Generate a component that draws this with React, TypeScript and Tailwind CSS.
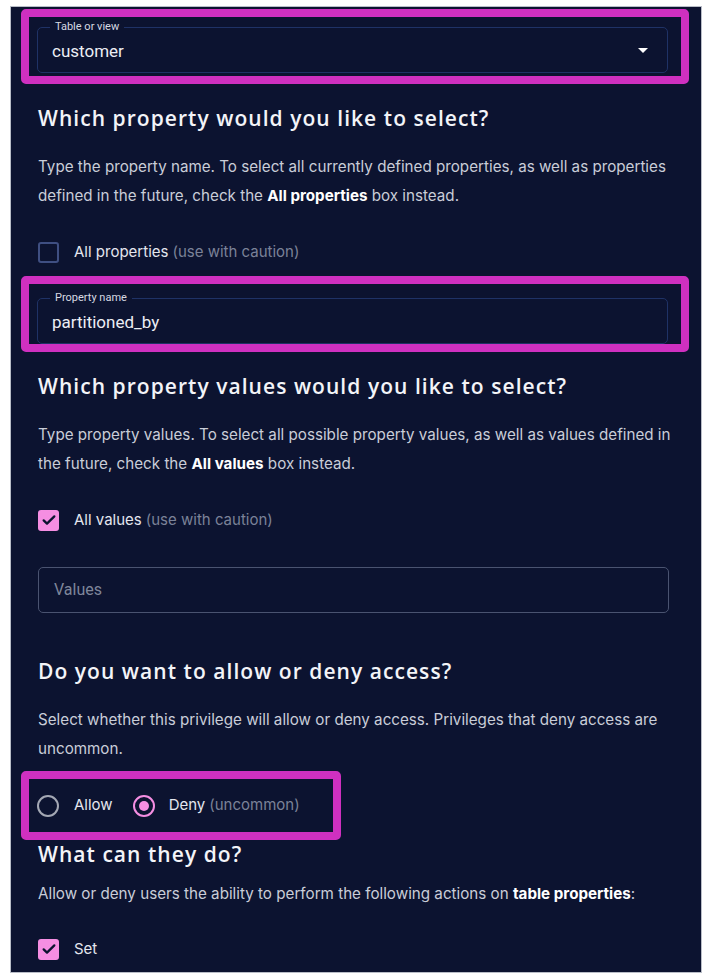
import { useState } from 'react';

const body = { fontFamily: 'Inter, "Noto Sans", sans-serif' };
const head = { fontFamily: '"Open Sans", Inter, sans-serif' };
const field = { fontFamily: 'Roboto, "Liberation Sans", sans-serif' };

function Heading({ children, className = '' }: { children: React.ReactNode; className?: string }) {
  return (
    <h2 style={head} className={`text-[21px] leading-[28px] font-semibold text-[#f3f4f8] tracking-[0.05em] ${className}`}>
      {children}
    </h2>
  );
}

function Para({ children, className = '' }: { children: React.ReactNode; className?: string }) {
  return (
    <p style={body} className={`text-[15.2px] leading-[29px] text-[#c9cdd8] ${className}`}>
      {children}
    </p>
  );
}

function Check({ checked, label, hint }: { checked: boolean; label: string; hint?: string }) {
  return (
    <div style={body} className="flex items-center h-6 text-[15px]">
      {checked ? (
        <span className="w-[21px] h-[21px] rounded-[3px] bg-[#f58ee2] flex items-center justify-center">
          <svg width="16" height="16" viewBox="0 0 24 24" fill="none" stroke="#0c1330" strokeWidth="3.4" strokeLinecap="round" strokeLinejoin="round">
            <path d="M4 12.5l5 5L20 6.5" />
          </svg>
        </span>
      ) : (
        <span className="w-[21px] h-[21px] rounded-[3px] border-2 border-[#3f4f82]" />
      )}
      <span className="ml-[15px] text-[#e4e6ee]">{label}</span>
      {hint && <span className="ml-1 text-[#7b8298]">{hint}</span>}
    </div>
  );
}

function OutlinedField({ label, value, select }: { label: string; value: string; select?: boolean }) {
  return (
    <div className="relative h-[46px] rounded-[5px] border border-[#1f3266] flex items-center pl-[14px] pr-[12px] pt-[4px]">
      <span style={field} className="absolute -top-[9px] left-[12px] px-[5px] bg-[#0c1330] text-[11px] leading-[16px] text-[#d6d9e2]">
        {label}
      </span>
      <span style={field} className="text-[17px] text-[#eceef4] flex-1">{value}</span>
      {select && (
        <svg width="24" height="24" viewBox="0 0 24 24" fill="#ffffff" className="-mt-[4px]">
          <path d="M7 10l5 5 5-5z" />
        </svg>
      )}
    </div>
  );
}

export default function App() {
  const [deny, setDeny] = useState(true);

  return (
    <div className="min-h-screen bg-white pt-[6px] pl-[10px]">
      <div className="w-[692px] h-[967px] bg-[#0c1330] border border-[#b9bdc7] overflow-hidden flex flex-col">
        {/* Table or view */}
        <div className="mt-[2px] ml-[10px] w-[668px] border-[8px] border-[#cf30c0] rounded-[5px] pt-[10px] pb-[3px] pl-[8px] pr-[13px]">
          <OutlinedField label="Table or view" value="customer" select />
        </div>

        <div className="pl-[27px] pr-[24px]">
          <Heading className="mt-[20px]">Which property would you like to select?</Heading>
          <Para className="mt-[20px]">
            Type the property name. To select all currently defined properties, as well as properties defined in the future, check the{' '}
            <b className="font-bold text-white">All properties</b> box instead.
          </Para>
          <div className="mt-[30px]">
            <Check checked={false} label="All properties" hint="(use with caution)" />
          </div>
        </div>

        {/* Property name */}
        <div className="mt-[12px] ml-[10px] w-[668px] h-[76px] border-[8px] border-[#cf30c0] rounded-[5px] pt-[14px] pl-[8px] pr-[13px] overflow-hidden">
          <OutlinedField label="Property name" value="partitioned_by" />
        </div>

        <div className="pl-[27px] pr-[24px]">
          <Heading className="mt-[20px]">Which property values would you like to select?</Heading>
          <Para className="mt-[20px]">
            Type property values. To select all possible property values, as well as values defined in the future, check the{' '}
            <b className="font-bold text-white">All values</b> box instead.
          </Para>
          <div className="mt-[30px]">
            <Check checked label="All values" hint="(use with caution)" />
          </div>
          <div className="mt-[35px] mr-[8px] h-[46px] rounded-[5px] border border-[#4a5370] flex items-center pl-[15px]">
            <span style={field} className="text-[16px] text-[#7f869a]">Values</span>
          </div>
          <Heading className="mt-[44px]">Do you want to allow or deny access?</Heading>
          <Para className="mt-[20px] leading-[28.5px]">
            Select whether this privilege will allow or deny access. Privileges that deny access are uncommon.
          </Para>
        </div>

        {/* Allow / deny */}
        <div className="mt-[8px] ml-[10px] w-[320px] h-[69px] border-[8px] border-[#cf30c0] rounded-[5px] px-[8px] flex items-center">
          <div style={body} className="flex items-center text-[15px]">
            <button onClick={() => setDeny(false)} className="flex items-center">
              <span className={`w-[22px] h-[22px] rounded-full border-2 flex items-center justify-center ${deny ? 'border-[#a4a8b4]' : 'border-[#f58ee2]'}`}>
                {!deny && <span className="w-[10px] h-[10px] rounded-full bg-[#f58ee2]" />}
              </span>
              <span className="ml-[15px] text-[#e4e6ee]">Allow</span>
            </button>
            <button onClick={() => setDeny(true)} className="flex items-center ml-[20px]">
              <span className={`w-[22px] h-[22px] rounded-full border-2 flex items-center justify-center ${deny ? 'border-[#f58ee2]' : 'border-[#a4a8b4]'}`}>
                {deny && <span className="w-[10px] h-[10px] rounded-full bg-[#f58ee2]" />}
              </span>
              <span className="ml-[14px] text-[#e4e6ee]">Deny</span>
              <span className="ml-1 text-[#7b8298]">(uncommon)</span>
            </button>
          </div>
        </div>

        <div className="pl-[27px] pr-[24px]">
          <Heading className="mt-[0px]">What can they do?</Heading>
          <Para className="mt-[11px]">
            Allow or deny users the ability to perform the following actions on{' '}
            <b className="font-bold text-white">table properties</b>:
          </Para>
          <div className="mt-[29px]">
            <Check checked label="Set" />
          </div>
        </div>
      </div>
    </div>
  );
}
